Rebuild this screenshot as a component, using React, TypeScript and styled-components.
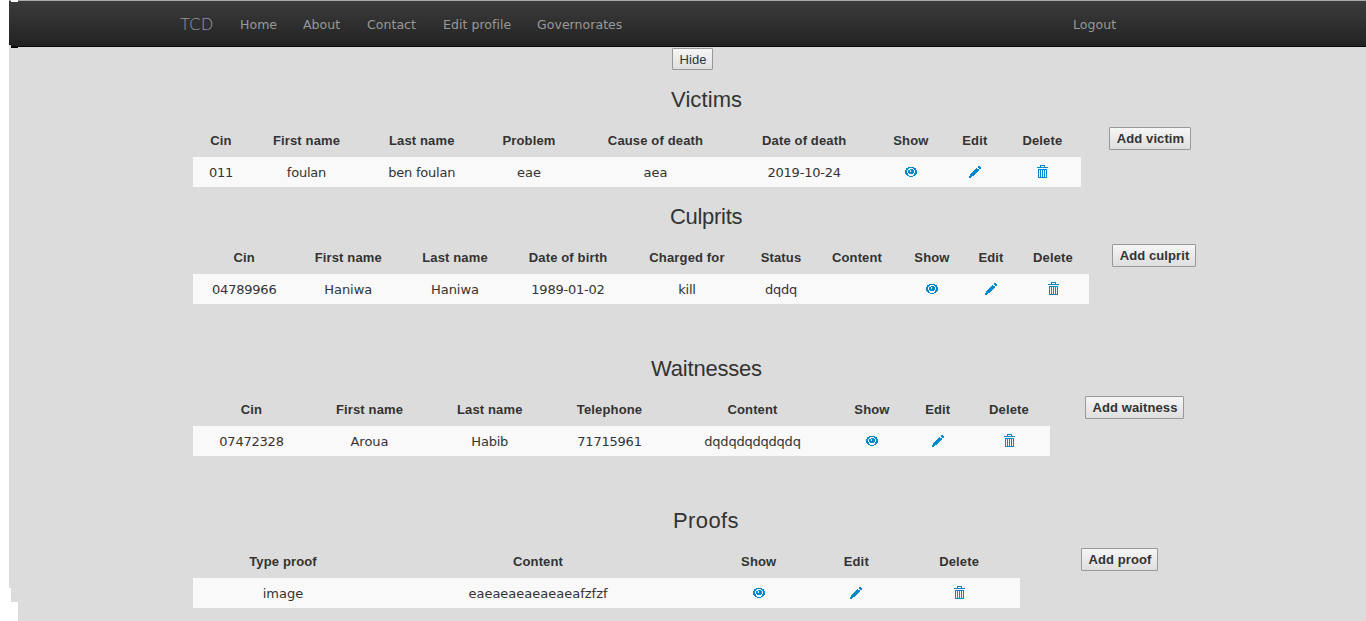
import React from "react";
import styled, { createGlobalStyle } from "styled-components";

const GlobalStyle = createGlobalStyle`
  * { box-sizing: border-box; }
  body { margin: 0; background: #fff; overflow: hidden; }
`;

const Page = styled.div`
  position: relative;
  height: 621px;
  margin-left: 9px;
  background: #dcdcdc;
  color: #333;
  font-family: "DejaVu Sans", Verdana, sans-serif;
  font-size: 13px;
  overflow: hidden;
`;

const Patch = styled.i<{ $x: number; $y: number; $w: number; $h: number; $c?: string }>`
  position: absolute;
  left: ${(p) => p.$x}px;
  top: ${(p) => p.$y}px;
  width: ${(p) => p.$w}px;
  height: ${(p) => p.$h}px;
  background: ${(p) => p.$c ?? "#fff"};
`;

const Navbar = styled.nav`
  height: 47px;
  display: flex;
  align-items: center;
  padding: 2px 249px 0 171px;
  background: linear-gradient(#3c3c3c, #222);
  border-top: 1px solid #aaa;
  border-bottom: 1px solid #080808;
  color: #999;
`;

const Brand = styled.a`
  width: 60px;
  font-family: "DejaVu Sans Light", "DejaVu Sans", sans-serif;
  font-weight: 200;
  font-size: 16.5px;
  line-height: 20px;
`;

const NavLink = styled.a<{ $w: number }>`
  width: ${(p) => p.$w}px;
  letter-spacing: 0.05px;
  font-size: 12.5px;
  white-space: nowrap;
`;

const Logout = styled(NavLink)`
  margin-left: auto;
`;

const HideRow = styled.div`
  display: flex;
  padding: 1px 0 0 663px;
`;

const Button = styled.button<{ $w: number; $bold?: boolean }>`
  width: ${(p) => p.$w}px;
  height: ${(p) => (p.$bold ? 23 : 22)}px;
  padding: 0 0 0 1px;
  border: 1px solid #999;
  border-radius: 1px;
  background: linear-gradient(#f6f6f6, #dedede);
  color: #333;
  font: ${(p) => (p.$bold ? "bold" : "normal")} 13px/19px "Liberation Sans", Arial, sans-serif;
  letter-spacing: 0.1px;
  white-space: nowrap;
`;

const Section = styled.section<{ $h: number }>`
  height: ${(p) => p.$h}px;
  padding: 15px 0 0 184px;
`;

const Title = styled.h3<{ $x: number; $ls: number }>`
  height: 30px;
  margin: 0 0 0 ${(p) => p.$x - 193}px;
  font: 400 22px/30px "Liberation Sans", Arial, sans-serif;
  letter-spacing: ${(p) => p.$ls}px;
`;

const Split = styled.div<{ $gap: number }>`
  display: flex;
  align-items: flex-start;
  gap: ${(p) => p.$gap}px;

  > button { margin-top: 12px; }
`;

const Table = styled.div<{ $w: number }>`
  width: ${(p) => p.$w}px;
  margin-top: 10px;
`;

const Row = styled.div<{ $cols: string; $head?: boolean }>`
  display: grid;
  grid-template-columns: ${(p) => p.$cols};
  height: ${(p) => (p.$head ? 32 : 30)}px;
  background: ${(p) => (p.$head ? "transparent" : "#f9f9f9")};
`;

const Head = styled.span`
  font: bold 13px/32px "Liberation Sans", Arial, sans-serif;
  letter-spacing: 0.15px;
  text-align: center;
  white-space: nowrap;
`;

const Cell = styled.span<{ $tight?: boolean }>`
  display: flex;
  align-items: center;
  justify-content: center;
  white-space: nowrap;
  padding-top: 1px;
  letter-spacing: ${(p) => (p.$tight ? "-0.22px" : "normal")};
`;

const Glyph = styled.svg`
  display: block;
  fill: #08c;
  shape-rendering: crispEdges;
`;

const Eye = () => (
  <Glyph width="12" height="12" viewBox="0 0 12 12">
    <path d="M3 1h6v1h-6zM1 2h3v1h-3zM8 2h3v1h-3zM1 3h2v1h-2zM5 3h3v1h-3zM9 3h2v1h-2zM0 4h2v3h-2zM10 4h2v3h-2zM3 4h2v3h-2zM6 4h3v3h-3zM5 6h1v1h-1zM0 7h3v1h-3zM4 7h4v1h-4zM9 7h3v1h-3zM1 8h2v1h-2zM9 8h2v1h-2zM2 9h2v1h-2zM8 9h2v1h-2zM4 10h4v1h-4z" />
  </Glyph>
);

const Pencil = () => (
  <Glyph width="12" height="12" viewBox="0 0 12 12">
    <path d="M9 0h2v1h-2zM9 1h3v1h-3zM7 2h1v1h-1zM10 2h2v1h-2zM6 3h4v1h-4zM5 4h5v1h-5zM4 5h5v1h-5zM3 6h5v1h-5zM2 7h5v1h-5zM1 8h5v1h-5zM1 9h4v1h-4zM0 10h3v1h-3zM0 11h2v1h-2z" />
  </Glyph>
);

const Trash = () => (
  <Glyph width="11" height="13" viewBox="0 0 11 13">
    <path d="M3 0h5v1h-5zM3 1h1v1h-1zM7 1h1v1h-1zM0 2h11v1h-11zM1 4h9v1h-9zM1 5h1v7h-1zM3 5h1v7h-1zM5 5h1v7h-1zM7 5h1v7h-1zM9 5h1v7h-1zM1 12h9v1h-9z" />
  </Glyph>
);

const IconLink = styled.a<{ $up?: number }>`
  display: block;
  padding-bottom: ${(p) => p.$up ?? 1}px;
`;

interface Group {
  title: string;
  titleX: number;
  titleSpacing: number;
  height: number;
  edges: number[];
  heads: string[];
  cells: string[];
  add: string;
  addX: number;
  addW: number;
}

const groups: Group[] = [
  {
    title: "Victims", titleX: 671, titleSpacing: 0.1, height: 117,
    edges: [193, 249, 364, 479.5, 578.5, 732.5, 875.8, 946, 1003.8, 1081],
    heads: ["Cin", "First name", "Last name", "Problem", "Cause of death", "Date of death"],
    cells: ["011", "foulan", "ben foulan", "eae", "aea", "2019-10-24"],
    add: "Add victim", addX: 1109, addW: 82,
  },
  {
    title: "Culprits", titleX: 670, titleSpacing: -0.3, height: 152,
    edges: [193, 295.5, 401, 509, 627, 747, 815, 899, 965, 1017, 1089],
    heads: ["Cin", "First name", "Last name", "Date of birth", "Charged for", "Status", "Content"],
    cells: ["04789966", "Haniwa", "Haniwa", "1989-01-02", "kill", "dqdq", ""],
    add: "Add culprit", addX: 1112, addW: 84,
  },
  {
    title: "Waitnesses", titleX: 651, titleSpacing: -0.2, height: 152,
    edges: [193, 310, 429, 550.5, 668.5, 836.5, 907.5, 968, 1050],
    heads: ["Cin", "First name", "Last name", "Telephone", "Content"],
    cells: ["07472328", "Aroua", "Habib", "71715961", "dqdqdqdqdqdq"],
    add: "Add waitness", addX: 1085, addW: 99,
  },
  {
    title: "Proofs", titleX: 673, titleSpacing: 0.4, height: 152,
    edges: [193, 373, 703, 814.4, 898.2, 1020],
    heads: ["Type proof", "Content"],
    cells: ["image", "eaeaeaeaeaeaeafzfzf"],
    add: "Add proof", addX: 1081, addW: 77,
  },
];

const columns = (edges: number[]) =>
  edges.slice(1).map((e, i) => `${(e - edges[i]).toFixed(1)}px`).join(" ");

const GroupSection = ({ g }: { g: Group }) => {
  const right = g.edges[g.edges.length - 1];
  const cols = columns(g.edges);
  return (
    <Section $h={g.height}>
      <Title $x={g.titleX} $ls={g.titleSpacing}>{g.title}</Title>
      <Split $gap={g.addX - right}>
        <Table $w={right - 193}>
          <Row $cols={cols} $head>
            {[...g.heads, "Show", "Edit", "Delete"].map((h, i) => <Head key={i}>{h}</Head>)}
          </Row>
          <Row $cols={cols}>
            {g.cells.map((c, i) => <Cell key={i} $tight={/[\dbdl]/.test(c)}>{c}</Cell>)}
            <Cell><IconLink><Eye /></IconLink></Cell>
            <Cell><IconLink><Pencil /></IconLink></Cell>
            <Cell><IconLink $up={2}><Trash /></IconLink></Cell>
          </Row>
        </Table>
        <Button $w={g.addW} $bold>{g.add}</Button>
      </Split>
    </Section>
  );
};

export default function App() {
  return (
    <>
      <GlobalStyle />
      <Page>
        <Navbar>
          <Brand>TCD</Brand>
          <NavLink $w={63}>Home</NavLink>
          <NavLink $w={64}>About</NavLink>
          <NavLink $w={76}>Contact</NavLink>
          <NavLink $w={94}>Edit profile</NavLink>
          <NavLink $w={86}>Governorates</NavLink>
          <Logout $w={44}>Logout</Logout>
        </Navbar>
        <HideRow><Button $w={41}>Hide</Button></HideRow>
        {groups.map((g) => <GroupSection key={g.title} g={g} />)}
        <Patch $x={2} $y={0} $w={7} $h={2} />
        <Patch $x={0} $y={44} $w={2} $h={1} $c="#080808" />
        <Patch $x={0} $y={45} $w={2} $h={2} $c="#dcdcdc" />
        <Patch $x={2} $y={46} $w={7} $h={2} $c="#080808" />
        <Patch $x={0} $y={588} $w={2} $h={33} />
        <Patch $x={2} $y={602} $w={7} $h={19} />
      </Page>
    </>
  );
}
